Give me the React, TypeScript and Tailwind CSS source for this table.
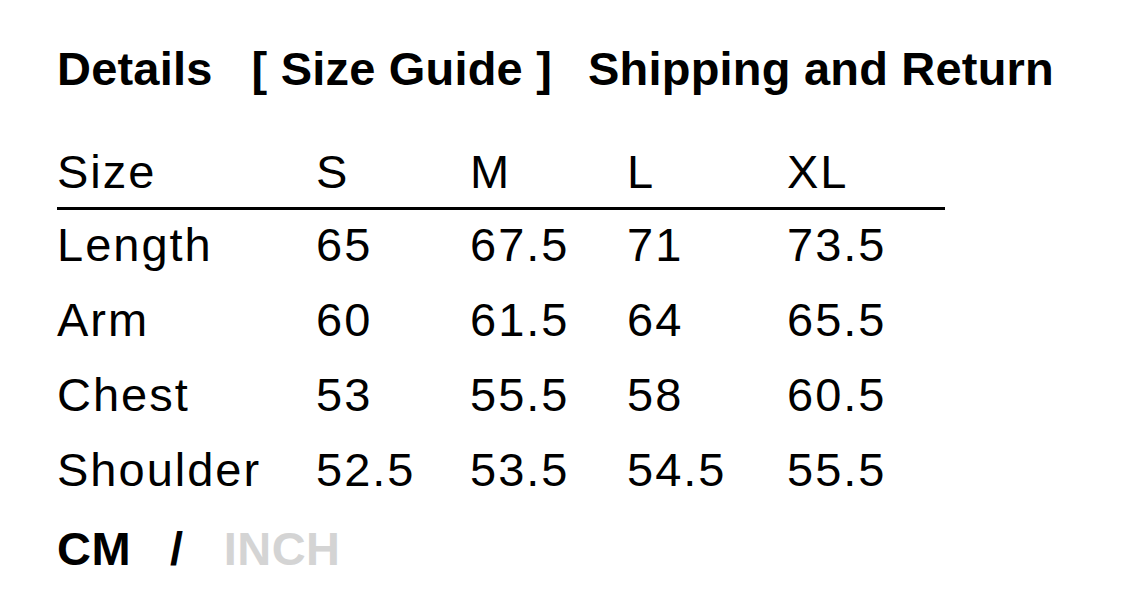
import React from "react";

const cols = "grid grid-cols-[259px_154px_157px_160px_158px]";

const rows: [string, string, string, string, string][] = [
  ["Length", "65", "67.5", "71", "73.5"],
  ["Arm", "60", "61.5", "64", "65.5"],
  ["Chest", "53", "55.5", "58", "60.5"],
  ["Shoulder", "52.5", "53.5", "54.5", "55.5"],
];

export default function App() {
  return (
    <div
      className="w-[1125px] h-[598px] bg-white text-black pl-[57px] pt-[43px] overflow-hidden"
      style={{ fontFamily: '"Liberation Sans", Arial, Helvetica, sans-serif' }}
    >
      <div className="flex text-[47px] leading-[52px] font-bold whitespace-pre tracking-[0.2px]">
        <span>Details</span>
        <span className="ml-[39px]">[ Size Guide ]</span>
        <span className="ml-[36px]">Shipping and Return</span>
      </div>

      <div className="mt-[51px] w-[888px] text-[47px] leading-[52px] tracking-[2px]">
        <div className={`${cols} pb-[9px] border-b-[3px] border-black`}>
          <span>Size</span>
          <span>S</span>
          <span>M</span>
          <span>L</span>
          <span>XL</span>
        </div>
        {rows.map((r) => (
          <div key={r[0]} className={`${cols} h-[75px] pt-[9px]`}>
            {r.map((c, i) => (
              <span key={i}>{c}</span>
            ))}
          </div>
        ))}
      </div>

      <div className="mt-[13px] flex text-[47px] leading-[52px] font-bold tracking-[0.5px]">
        <span>CM</span>
        <span className="ml-[39px]">/</span>
        <span className="ml-[40px] text-[#d4d4d4]">INCH</span>
      </div>
    </div>
  );
}
